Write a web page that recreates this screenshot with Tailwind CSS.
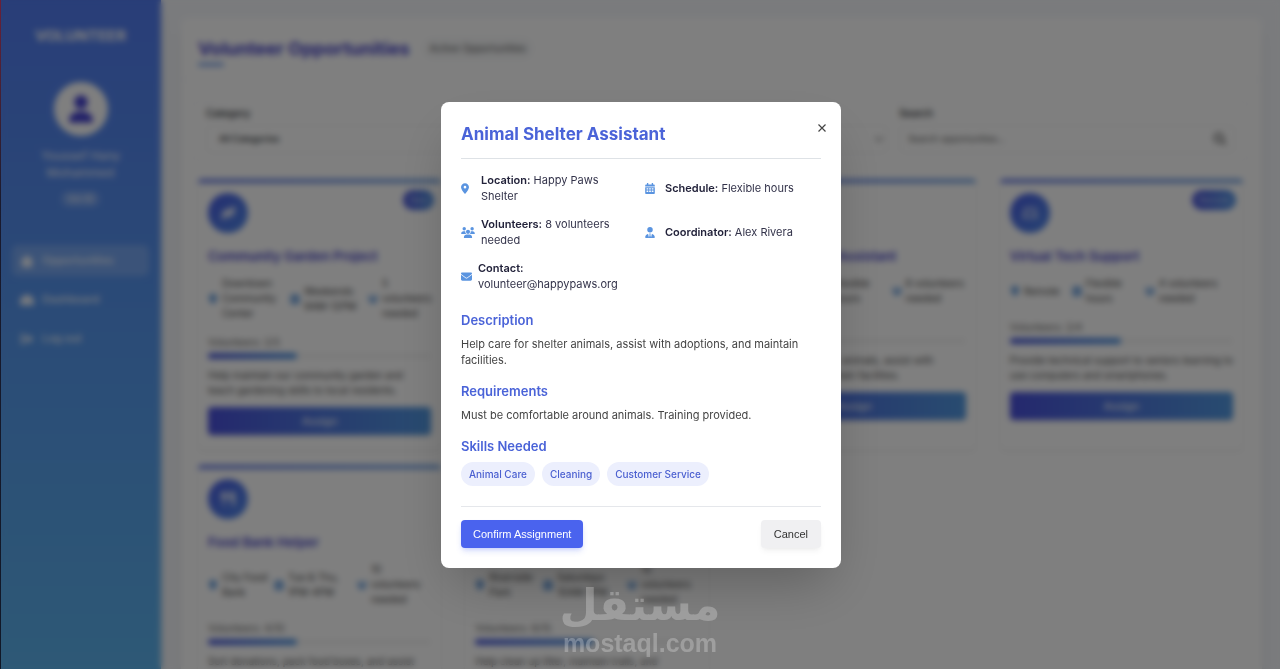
<!DOCTYPE html>
<html lang="en">
<head>
  <meta charset="UTF-8" />
  <meta name="viewport" content="width=device-width, initial-scale=1.0" />
  <title>Volunteer Opportunities</title>
  <script src="https://cdn.jsdelivr.net/npm/@tailwindcss/browser@4"></script>
</head>
<body class="bg-[#f5f7fb] font-[Inter,'Noto_Sans',sans-serif] text-[#212529]">
  <!-- Icon sprite -->
  <svg class="hidden">
    <symbol id="pin" viewBox="0 0 384 512"><path d="M215.7 499.2C267 435 384 279.4 384 192C384 86 298 0 192 0S0 86 0 192c0 87.4 117 243 168.3 307.2c12.3 15.3 35.1 15.3 47.4 0zM192 128a64 64 0 1 1 0 128 64 64 0 1 1 0-128z"/></symbol>
    <symbol id="calendar" viewBox="0 0 448 512"><path fill-rule="evenodd" d="M128 0c9 0 16 7 16 16V64H304V16c0-9 7-16 16-16h32c9 0 16 7 16 16V64h32c26.500 0 48 21.500 48 48v48H0V112C0 85.500 21.500 64 48 64H80V16C80 7 87 0 96 0zM0 192H448V464c0 26.500-21.500 48-48 48H48c-26.500 0-48-21.500-48-48zM64 240v64h80v-64zm120 0v64h80v-64zm120 0v64h80v-64zM64 352v64h80v-64zm120 0v64h80v-64zm120 0v64h80v-64z"/></symbol>
    <symbol id="users" viewBox="0 0 640 512"><path d="M144 0a80 80 0 1 1 0 160A80 80 0 1 1 144 0zM512 0a80 80 0 1 1 0 160A80 80 0 1 1 512 0zM0 298.7C0 239.8 47.8 192 106.7 192h42.7c15.9 0 31 3.5 44.6 9.7c-1.3 7.2-1.9 14.7-1.9 22.3c0 38.2 16.8 72.5 43.3 96c-.2 0-.4 0-.7 0H21.3C9.6 320 0 310.4 0 298.7zM405.3 320c-.2 0-.4 0-.7 0c26.6-23.5 43.3-57.8 43.3-96c0-7.6-.7-15-1.9-22.3c13.6-6.3 28.7-9.7 44.6-9.7h42.7C592.2 192 640 239.8 640 298.7c0 11.8-9.6 21.3-21.3 21.3H405.3zM224 224a96 96 0 1 1 192 0 96 96 0 1 1 -192 0zM128 485.3C128 411.7 187.7 352 261.3 352H378.7C452.3 352 512 411.7 512 485.3c0 14.7-11.9 26.7-26.7 26.7H154.7c-14.7 0-26.7-11.9-26.7-26.7z"/></symbol>
    <symbol id="user-tie" viewBox="0 0 448 512"><path d="M96 128a128 128 0 1 0 256 0A128 128 0 1 0 96 128zm94.5 200.2l18.6 31L175.8 483.1l-36-146.9c-2-8.1-9.8-13.4-17.9-11.3C51.9 342.4 0 405.8 0 481.3c0 17 13.8 30.7 30.7 30.7H162.5H168 280h5.5H417.3c17 0 30.7-13.8 30.7-30.7c0-75.5-51.9-138.9-121.9-156.4c-8.1-2-15.9 3.3-17.9 11.3l-36 146.9L238.9 359.2l18.6-31c6.4-10.7-1.3-24.2-13.7-24.2H224 204.3c-12.4 0-20.1 13.6-13.7 24.2z"/></symbol>
    <symbol id="envelope" viewBox="0 0 512 512"><path d="M48 64C21.5 64 0 85.5 0 112c0 15.1 7.1 29.3 19.2 38.4L236.8 313.6c11.4 8.5 27 8.5 38.4 0L492.8 150.4c12.1-9.1 19.2-23.3 19.2-38.4c0-26.5-21.5-48-48-48H48zM0 176V384c0 35.3 28.7 64 64 64H448c35.3 0 64-28.7 64-64V176L294.4 339.2c-22.8 17.1-54 17.1-76.8 0L0 176z"/></symbol>
    <symbol id="user" viewBox="0 0 448 512"><path d="M224 256A128 128 0 1 0 224 0a128 128 0 1 0 0 256zm-45.700 48C79.800 304 0 383.800 0 482.300C0 498.700 13.300 512 29.700 512H418.300c16.400 0 29.700-13.300 29.700-29.700C448 383.800 368.200 304 269.700 304H178.300z"/></symbol>
    <symbol id="search" viewBox="0 0 512 512"><path d="M416 208c0 45.900-14.900 88.300-40 122.700L502.600 457.400c12.500 12.500 12.500 32.800 0 45.300s-32.800 12.500-45.300 0L330.700 376c-34.400 25.200-76.800 40-122.700 40C93.100 416 0 322.900 0 208S93.100 0 208 0S416 93.100 416 208zM208 352a144 144 0 1 0 0-288 144 144 0 1 0 0 288z"/></symbol>
    <symbol id="home" viewBox="0 0 16 16"><path d="M8 1 0 8h2v7h12V8h2z"/></symbol>
    <symbol id="gauge" viewBox="0 0 16 16"><path d="M8 2a8 8 0 0 0-8 8v4h16v-4a8 8 0 0 0-8-8z"/></symbol>
    <symbol id="logout" viewBox="0 0 16 16"><path d="M6 2v2H3v8h3v2H3a2 2 0 0 1-2-2V4a2 2 0 0 1 2-2zM10 3l5 5-5 5v-3H5V6h5z"/></symbol>
    <symbol id="leaf" viewBox="0 0 16 16"><path d="M15 1c1 8-3 12-8 11-2 0-3 1-4 3l-2-1c1-2 1-3 1-5C2 4 8 5 15 1z"/></symbol>
    <symbol id="laptop" viewBox="0 0 16 16"><path d="M2 3h12v8h2v2H0v-2h2zm2 2v6h8V5z" fill-rule="evenodd"/></symbol>
    <symbol id="food" viewBox="0 0 16 16"><path d="M1 1h6v7H5v7H3V8H1zM9 1h6v14h-3V9H9z"/></symbol>
    <symbol id="paw" viewBox="0 0 16 16"><path d="M8 7c3 0 5 3 5 5s-2 3-5 2c-3 1-5 0-5-2s2-5 5-5z"/></symbol>
  </svg>

  <div class="flex h-screen overflow-hidden">
    <!-- Sidebar -->
    <aside class="w-[161px] shrink-0 bg-linear-to-b from-[#527cf0] to-[#5cb2ec] px-3 pt-6 text-white shadow-lg">
      <h2 class="text-center text-[15px] leading-6 font-bold">VOLUNTEER</h2>
      <div class="mt-[34px] flex flex-col items-center">
        <div class="flex size-[54px] items-center justify-center rounded-full bg-white text-[#4340d0]">
          <svg class="h-7 w-6 fill-current"><use href="#user"/></svg>
        </div>
        <p class="mt-[11px] text-center text-xs leading-[17px] font-medium text-white/80">Youssef Hany<br>Mohammed</p>
        <span class="mt-[10px] rounded-full bg-white/20 px-1.5 text-[9px] leading-4">Vol-ID</span>
      </div>
      <nav class="mt-[38px] flex flex-col gap-2 text-[11px] font-medium text-white/90">
        <a href="#" class="flex h-[31px] items-center gap-2 rounded-md bg-white/20 px-2"><svg class="size-3.5 fill-current"><use href="#home"/></svg>Opportunities</a>
        <a href="#" class="flex h-[31px] items-center gap-2 px-2"><svg class="size-3.5 fill-current"><use href="#gauge"/></svg>Dashboard</a>
        <a href="#" class="flex h-[31px] items-center gap-2 px-2"><svg class="size-3.5 fill-current"><use href="#logout"/></svg>Log out</a>
      </nav>
    </aside>

    <!-- Content -->
    <main class="min-w-0 flex-1 pt-[18px] pr-[18px] pl-5">
      <div class="min-h-screen rounded-lg bg-white shadow-lg">
        <header class="flex h-[62px] items-center gap-3 border-b border-[#f5f5fa] px-[17px]">
          <div class="relative">
            <h1 class="text-lg leading-7 font-bold text-[#4543c8]">Volunteer Opportunities</h1>
            <span class="absolute -bottom-[3px] left-0 h-[3px] w-[26px] rounded bg-[#5f8fe8]"></span>
          </div>
          <span class="rounded-full bg-[#f8f9fa] px-2 py-1 text-[10px] text-[#555]">Active Opportunities</span>
        </header>

        <form class="mr-3.5 ml-3 mt-5 grid grid-cols-3 gap-[11px] rounded-md border border-[#f3f3f8] px-3 pt-[5px] pb-2 text-[9px]">
          <div>
            <label for="category" class="block text-[10px] leading-[15px] font-medium">Category</label>
            <select id="category" class="mt-1 h-7 w-full appearance-none rounded border border-[#f0f0f0] px-3 font-medium"><option>All Categories</option></select>
          </div>
          <div>
            <select aria-label="Filter" class="mt-[19px] h-7 w-full rounded border border-[#f0f0f0] px-3 text-[#aaa]"></select>
          </div>
          <div>
            <label for="search" class="block text-[10px] leading-[15px] font-medium">Search</label>
            <div class="mt-1 flex h-7 items-center rounded border border-[#f0f0f0] px-2">
              <input id="search" type="text" placeholder="Search opportunities..." class="min-w-0 flex-1 outline-none placeholder:text-[#555]">
              <svg class="size-3 fill-[#333]"><use href="#search"/></svg>
            </div>
          </div>
        </form>

        <div id="cards" class="mt-[17px] grid grid-cols-4 gap-x-6 gap-y-[15px] pr-[19px] pl-[17px]"></div>
      </div>
    </main>
  </div>

  <!-- Window edge -->
  <div class="fixed inset-y-0 left-0 z-20 w-px bg-linear-to-b from-[#6b2038] via-[#1a1a2e] via-30% to-[#111827]"></div>

  <!-- Modal -->
  <div class="fixed inset-0 z-10 flex items-center justify-center bg-black/50 pt-px pl-[2px] backdrop-blur-[3px]">
    <div role="dialog" aria-labelledby="modal-title" class="relative w-[400px] rounded-lg bg-white p-5 shadow-2xl">
      <button aria-label="Close" class="absolute top-4 right-[9px] flex size-5 items-center justify-center rounded-full text-[#444]">
        <svg class="size-2 stroke-current stroke-[1.2]" viewBox="0 0 8 8"><path d="M.5.5l7 7M7.500.5l-7 7"/></svg>
      </button>
      <h2 id="modal-title" class="border-b border-[#dee2e6] pb-3 text-[17px] leading-6 font-bold text-[#4a63d8]">Animal Shelter Assistant</h2>

      <div class="mt-[13px] grid grid-cols-2 gap-x-2 gap-y-3 text-[11px] leading-4 text-[#33334a]">
        <div class="flex items-center"><span class="w-5 shrink-0"><svg class="h-[11px] w-2 fill-[#5a94e0]"><use href="#pin"/></svg></span><span class="pr-2"><b class="font-semibold text-[#22223a]">Location:</b> Happy Paws Shelter</span></div>
        <div class="flex items-center"><span class="w-5 shrink-0"><svg class="h-[11px] w-2.5 fill-[#5a94e0]"><use href="#calendar"/></svg></span><span><b class="font-semibold text-[#22223a]">Schedule:</b> Flexible hours</span></div>
        <div class="flex items-center"><span class="w-5 shrink-0"><svg class="h-[11px] w-3.5 fill-[#5a94e0]"><use href="#users"/></svg></span><span class="pr-2"><b class="font-semibold text-[#22223a]">Volunteers:</b> 8 volunteers needed</span></div>
        <div class="flex items-center"><span class="w-5 shrink-0"><svg class="h-[11px] w-2.5 fill-[#5a94e0]"><use href="#user-tie"/></svg></span><span><b class="font-semibold text-[#22223a]">Coordinator:</b> Alex Rivera</span></div>
        <div class="flex items-center"><span class="w-[17px] shrink-0"><svg class="size-[11px] fill-[#5a94e0]"><use href="#envelope"/></svg></span><span><b class="font-semibold text-[#22223a]">Contact:</b> volunteer@happypaws.org</span></div>
      </div>

      <h3 class="mt-5 mb-2 text-[13px] leading-4 font-semibold text-[#4a63d8]">Description</h3>
      <p class="text-[11px] leading-4 text-[#444]">Help care for shelter animals, assist with adoptions, and maintain facilities.</p>
      <h3 class="mt-[15px] mb-2 text-[13px] leading-4 font-semibold text-[#4a63d8]">Requirements</h3>
      <p class="text-[11px] leading-4 text-[#444]">Must be comfortable around animals. Training provided.</p>
      <h3 class="mt-[15px] mb-2 text-[13px] leading-4 font-semibold text-[#4a63d8]">Skills Needed</h3>
      <div class="flex gap-[7px] text-[10px] leading-6 font-medium text-[#4a5fd0]">
        <span class="rounded-full bg-[#eceffd] px-2">Animal Care</span>
        <span class="rounded-full bg-[#eceffd] px-2">Cleaning</span>
        <span class="rounded-full bg-[#eceffd] px-2">Customer Service</span>
      </div>

      <div class="mt-5 flex justify-between border-t border-[#e5e7eb] pt-[13px] font-['Liberation_Sans',sans-serif] text-[11px]">
        <button class="h-7 rounded bg-[#4a63ee] px-3 text-white shadow-md shadow-[#4361ee]/20">Confirm Assignment</button>
        <button class="h-7 rounded bg-[#f0f0f2] px-[13px] text-[#333] shadow-md shadow-black/5">Cancel</button>
      </div>
    </div>
  </div>

  <!-- Watermark -->
  <div class="pointer-events-none fixed inset-x-0 bottom-3 z-20 flex flex-col items-center font-bold text-white opacity-25">
    <span lang="ar" dir="rtl" class="font-['DejaVu_Sans',sans-serif] text-[44px] leading-[48px]">مستقل</span>
    <span class="font-['Liberation_Sans',sans-serif] text-[25px] leading-7">mostaql.com</span>
  </div>

  <script>
    // meta: [icon, width of the item, lines]
    const cards = [
      { title: "Community Garden Project", icon: "leaf", badge: "New", count: "2/5", fill: 40,
        meta: [["pin", 82, "Downtown<br>Community<br>Center"], ["calendar", 78, "Weekends<br>9AM-12PM"], ["users", 62, "5<br>volunteers<br>needed"]],
        text: "Help maintain our community garden and teach gardening skills to local residents." },
      null,
      { title: "Animal Shelter Assistant", icon: "paw", count: "3/8", fill: 38,
        meta: [["pin", 77, "Happy Paws<br>Shelter"], ["calendar", 72, "Flexible<br>hours"], ["users", 73, "8 volunteers<br>needed"]],
        text: "Help care for shelter animals, assist with adoptions, and maintain facilities." },
      { title: "Virtual Tech Support", icon: "laptop", badge: "Remote", count: "2/4", fill: 50,
        meta: [["pin", 62, "Remote"], ["calendar", 73, "Flexible<br>hours"], ["users", 80, "4 volunteers<br>needed"]],
        text: "Provide technical support to seniors learning to use computers and smartphones." },
      { title: "Food Bank Helper", icon: "food", count: "4/10", fill: 40,
        meta: [["pin", 66, "City Food<br>Bank"], ["calendar", 83, "Tue &amp; Thu,<br>1PM-4PM"], ["users", 72, "10<br>volunteers<br>needed"]],
        text: "Sort donations, pack food boxes, and assist" },
      { title: "", icon: "leaf", count: "8/15", fill: 53,
        meta: [["pin", 68, "Riverside<br>Park"], ["calendar", 84, "Saturdays<br>10AM-1PM"], ["users", 70, "15<br>volunteers<br>needed"]],
        text: "Help clean up litter, maintain trails, and" }
    ];
    document.getElementById("cards").innerHTML = cards.map(c => c ? `
      <article class="relative rounded-md bg-white px-2.5 pb-[15px] shadow-sm">
        <div class="-mx-2.5 h-1 rounded-t bg-linear-to-r from-[#5f74e4] to-[#6c9fe4]"></div>
        ${c.badge ? `<span class="absolute top-[11px] right-[7px] rounded-full bg-linear-to-r from-[#4a50d8] to-[#4f93e4] px-1.5 text-[9px] leading-5 text-white/70">${c.badge}</span>` : ""}
        <div class="mt-2.5 flex size-10 items-center justify-center rounded-full bg-linear-to-br from-[#4a5ce4] to-[#4f88e8]">
          <svg class="size-4 fill-white/80"><use href="#${c.icon}"/></svg>
        </div>
        <h3 class="mt-[13px] h-5 text-[13px] leading-5 font-semibold text-[#4a48c8]">${c.title}</h3>
        <div class="mt-2.5 flex items-center text-[10px] leading-[15px] text-[#444]">
          ${c.meta.map(([icon, width, lines]) => `
            <div class="flex shrink-0 items-center gap-1 whitespace-nowrap" style="width:${width}px">
              <svg class="h-2.5 w-2.5 shrink-0 fill-[#3f84d4]"><use href="#${icon}"/></svg><span>${lines}</span>
            </div>`).join("")}
        </div>
        <p class="mt-[14px] text-[10px] leading-[14px] text-[#666]">Volunteers: ${c.count}</p>
        <div class="mt-1 h-1.5 rounded-full bg-[#f5f5f5]">
          <div class="h-1.5 rounded-full bg-linear-to-r from-[#4a58d8] to-[#4f93e0]" style="width:${c.fill}%"></div>
        </div>
        <p class="mt-[9px] text-[10px] leading-[15px] text-[#4a4a4a]">${c.text}</p>
        <button class="mt-[9px] h-7 w-full rounded bg-linear-to-r from-[#4a50dc] to-[#5298e0] text-[11px] font-medium text-white/90 shadow-sm">Assign</button>
      </article>` : `<article class="rounded-md bg-white shadow-sm"></article>`).join("");
  </script>
</body>
</html>
